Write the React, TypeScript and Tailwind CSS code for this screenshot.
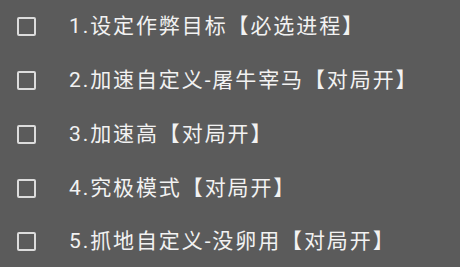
const items = [
  "1.设定作弊目标【必选进程】",
  "2.加速自定义-屠牛宰马【对局开】",
  "3.加速高【对局开】",
  "4.究极模式【对局开】",
  "5.抓地自定义-没卵用【对局开】",
];

const App = () => {
  return (
    <div
      className="w-[460px] h-[267px] overflow-hidden bg-[#5b5b5b] text-[#f2f2f2]"
      style={{ fontFamily: "Roboto, 'Noto Sans CJK SC', sans-serif" }}
    >
      {items.map((label) => (
        <div key={label} className="flex items-center h-[53.75px] pl-[17px]">
          <span className="w-[19px] h-[19px] border-2 border-[#dcdcdc] rounded-[2px] shrink-0" />
          <span className="ml-[33px] text-[21px] tracking-[1.9px] leading-none whitespace-nowrap">{label}</span>
        </div>
      ))}
    </div>
  );
};

export default App;
